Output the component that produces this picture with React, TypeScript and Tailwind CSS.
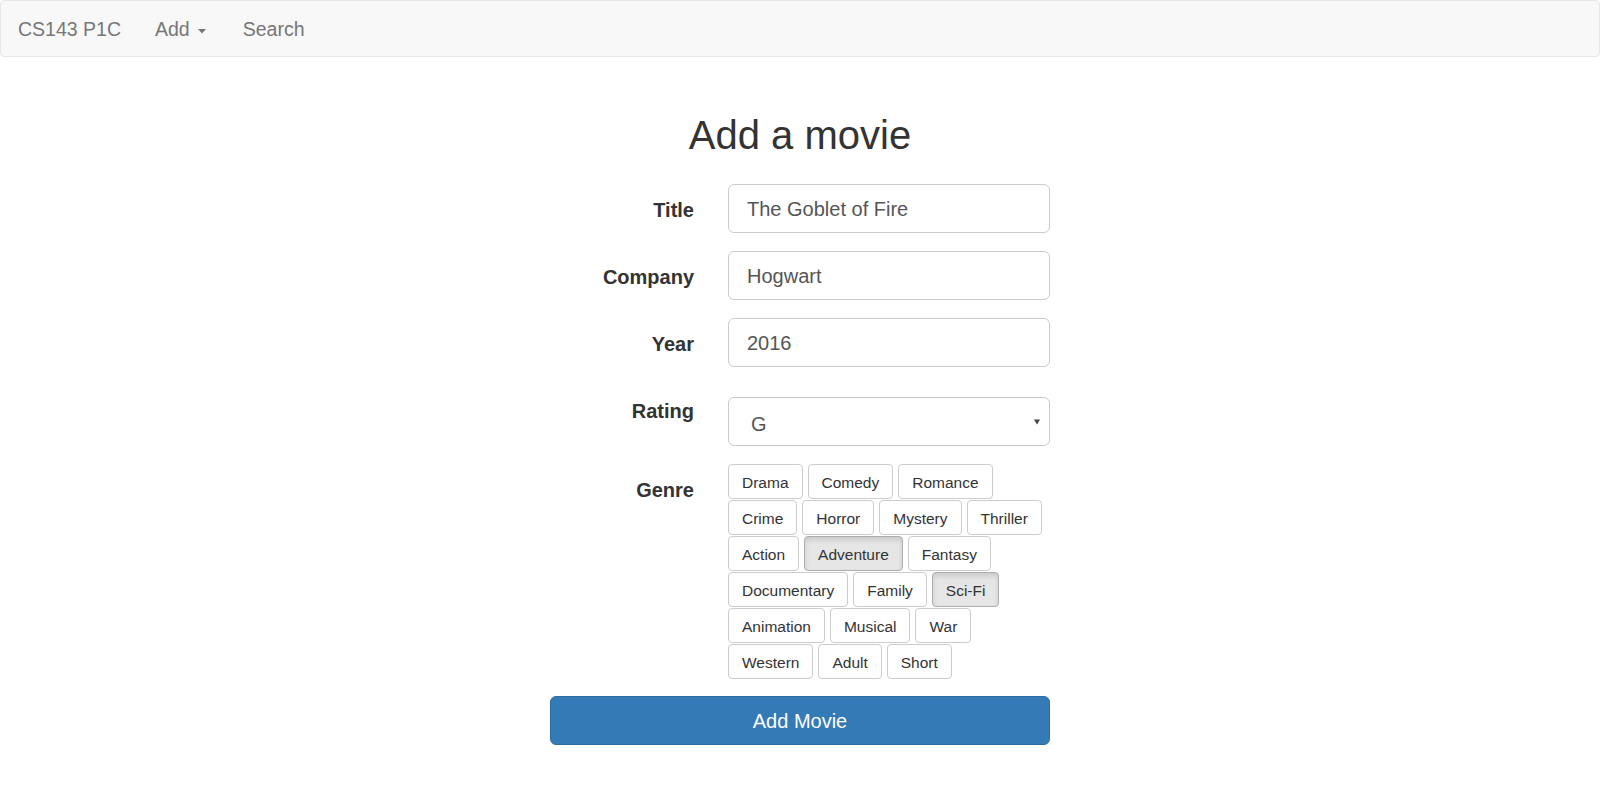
const genres = [
  { name: "Drama", active: false },
  { name: "Comedy", active: false },
  { name: "Romance", active: false },
  { name: "Crime", active: false },
  { name: "Horror", active: false },
  { name: "Mystery", active: false },
  { name: "Thriller", active: false },
  { name: "Action", active: false },
  { name: "Adventure", active: true },
  { name: "Fantasy", active: false },
  { name: "Documentary", active: false },
  { name: "Family", active: false },
  { name: "Sci-Fi", active: true },
  { name: "Animation", active: false },
  { name: "Musical", active: false },
  { name: "War", active: false },
  { name: "Western", active: false },
  { name: "Adult", active: false },
  { name: "Short", active: false },
];

function Navbar() {
  return (
    <nav className="h-[57px] pt-[3px] flex items-center bg-[#f8f8f8] border border-[#e7e7e7] rounded-[4px] text-[19.5px] text-[#777]">
      <span className="ml-[17px]">CS143 P1C</span>
      <span className="ml-[34px] flex items-center">
        Add
        <svg width="8" height="5" viewBox="0 0 8 5" className="ml-[8px] mt-[2px]">
          <path d="M0 0 L8 0 L4 4.5 Z" fill="#777" />
        </svg>
      </span>
      <span className="ml-[37px]">Search</span>
    </nav>
  );
}

function TextField({ label, value, labelPad }: { label: string; value: string; labelPad: string }) {
  return (
    <>
      <label className={`text-right font-bold text-[20px] leading-[28px] text-[#333] ${labelPad}`}>
        {label}
      </label>
      <div className="h-[49px] flex items-center pl-[18px] border border-[#ccc] rounded-[6px] text-[20px] text-[#555] bg-white">
        {value}
      </div>
    </>
  );
}

export default function App() {
  return (
    <div className="min-h-screen bg-white font-['Liberation_Sans',Arial,sans-serif]">
      <Navbar />

      <h1 className="mt-[56px] text-center text-[40px] leading-[44px] text-[#333] font-normal">
        Add a movie
      </h1>

      <form className="w-[500px] mx-auto mt-[27px]">
        <div className="grid grid-cols-[144px_322px] gap-x-[34px]">
          <TextField label="Title" value="The Goblet of Fire" labelPad="pt-[12px]" />
          <div className="col-span-2 h-[18px]" />
          <TextField label="Company" value="Hogwart" labelPad="pt-[12px]" />
          <div className="col-span-2 h-[18px]" />
          <TextField label="Year" value="2016" labelPad="pt-[12px]" />
          <div className="col-span-2 h-[30px]" />

          <label className="text-right font-bold text-[20px] leading-[28px] text-[#333]">Rating</label>
          <div className="h-[49px] flex items-center justify-between pl-[22px] pr-[9px] border border-[#ccc] rounded-[6px] text-[20px] text-[#555] bg-white">
            <span className="pt-[4px]">G</span>
            <svg width="6" height="6" viewBox="0 0 6 6">
              <path d="M0 0.5 L6 0.5 L3 5.5 Z" fill="#444" />
            </svg>
          </div>
          <div className="col-span-2 h-[18px]" />

          <label className="text-right font-bold text-[20px] leading-[28px] text-[#333] pt-[12px]">Genre</label>
          <div className="flex flex-wrap gap-x-[5px] gap-y-[1px]">
            {genres.map((g) => (
              <button
                key={g.name}
                type="button"
                className={`h-[35px] px-[13px] pt-[3px] border rounded-[4px] text-[15.5px] text-[#333] ${
                  g.active
                    ? "bg-[#e6e6e6] border-[#adadad] shadow-[inset_0_3px_5px_rgba(0,0,0,0.125)]"
                    : "bg-white border-[#ccc]"
                }`}
              >
                {g.name}
              </button>
            ))}
          </div>
        </div>

        <button
          type="button"
          className="mt-[17px] w-full h-[49px] bg-[#337ab7] border border-[#2e6da4] rounded-[6px] text-white text-[20px]"
        >
          Add Movie
        </button>
      </form>
    </div>
  );
}
